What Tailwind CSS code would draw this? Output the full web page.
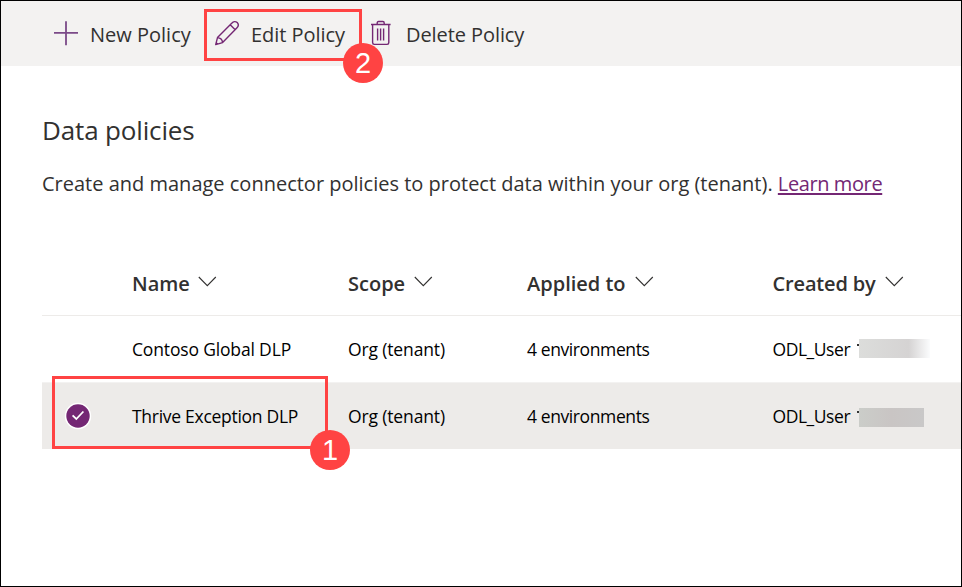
<!DOCTYPE html>
<html lang="en">
<head>
<meta charset="utf-8">
<title>Data policies</title>
<script src="https://cdn.jsdelivr.net/npm/@tailwindcss/browser@4"></script>
</head>
<body class="bg-white">
<div class="relative flex h-[587px] w-[962px] flex-col overflow-hidden border border-black bg-white font-['Open_Sans','Noto_Sans',sans-serif] text-[20px] text-[#323130]">
  <!-- Command bar -->
  <header class="flex h-[65px] shrink-0 items-center bg-[#f3f2f1] pl-[52px]">
    <button class="flex w-[161px] items-center gap-[12px] whitespace-nowrap">
      <svg class="size-[25px] shrink-0" viewBox="0 0 25 25" fill="none" stroke="#7b4a88" stroke-width="1.8"><path d="M13 .3V24.3M1 11.8H25"/></svg>
      <span class="pt-[2px]">New Policy</span>
    </button>
    <button class="flex w-[155px] items-center gap-[11px] whitespace-nowrap">
      <svg class="mb-[2px] size-[26px] shrink-0" viewBox="0 0 26 26" fill="none" stroke="#742774" stroke-width="1.4" stroke-linejoin="round"><path d="M1.7 24.6L3.5 17.6L17.7 3.2C19.4 1.3 21.6 1.1 23.2 2.6C24.7 4.2 24.5 6.4 22.8 8.1L8.6 22.6L1.7 24.6ZM16.2 4.8L21.2 9.8M3.5 17.6C6.2 17.8 8.3 19.8 8.6 22.6M2.2 22.7L3.6 24"/></svg>
      <span class="pt-[2px] tracking-[-0.04px]">Edit Policy</span>
    </button>
    <button class="flex items-center gap-[14px] whitespace-nowrap pl-[1px]">
      <svg class="mb-[1px] h-[26px] w-[22px] shrink-0" viewBox="0 0 22 26" fill="none" stroke="#742774" stroke-width="1.4"><path d="M1 4.5H20.6M7.2 4.5V3C7.2 2.2 7.7 1.5 8.5 1.5H12.9C13.7 1.5 14.2 2.2 14.2 3V4.5M2.6 4.8V22.6C2.6 23.8 3.2 24.4 4.3 24.4H17.1C18.2 24.4 18.8 23.8 18.8 22.6V4.8M7.6 8.4V20.6M10.6 8.4V20.6M13.6 8.4V20.6"/></svg>
      <span class="pt-[2px] tracking-[-0.08px]">Delete Policy</span>
    </button>
  </header>

  <main class="flex flex-col pl-[41px]">
    <h1 class="mt-[46px] text-[26px] leading-[36px] tracking-[-0.15px]">Data policies</h1>
    <p class="mt-[22px] whitespace-nowrap leading-[28px]">Create and manage connector policies to protect data within your org (tenant). <a class="tracking-[-0.4px] text-[#742774] underline decoration-2 underline-offset-[2px]">Learn more</a></p>

    <div class="mt-[52px]">
      <div class="grid h-[66px] grid-cols-[90px_216px_179px_245.5px_1fr] items-center border-b border-[#edebe9] pt-[2px] font-semibold">
        <span></span>
        <span class="flex items-center gap-[8px]">Name<svg class="mb-[4px] h-[11px] w-[19px]" viewBox="0 0 19 11" fill="none" stroke="#323130" stroke-width="1.1"><path d="M.8 1L9.3 9.6L17.8 1"/></svg></span>
        <span class="flex items-center gap-[9px]">Scope<svg class="mb-[4px] h-[11px] w-[19px]" viewBox="0 0 19 11" fill="none" stroke="#323130" stroke-width="1.1"><path d="M.8 1L9.3 9.6L17.8 1"/></svg></span>
        <span class="flex items-center gap-[9px]">Applied to<svg class="mb-[4px] h-[11px] w-[19px]" viewBox="0 0 19 11" fill="none" stroke="#323130" stroke-width="1.1"><path d="M.8 1L9.3 9.6L17.8 1"/></svg></span>
        <span class="flex items-center gap-[9px] whitespace-nowrap"><span class="tracking-[-0.15px]">Created by</span><svg class="mb-[4px] h-[11px] w-[19px]" viewBox="0 0 19 11" fill="none" stroke="#323130" stroke-width="1.1"><path d="M.8 1L9.3 9.6L17.8 1"/></svg></span>
      </div>
      <div class="grid h-[66px] grid-cols-[90px_216px_179px_245.5px_1fr] items-center whitespace-nowrap text-[17.5px] text-black">
        <span></span>
        <span class="tracking-[-0.16px]">Contoso Global DLP</span>
        <span class="tracking-[-0.14px]">Org (tenant)</span>
        <span class="tracking-[-0.4px]">4 environments</span>
        <span class="flex items-center"><span class="w-[84.5px] tracking-[-0.45px]">ODL_User</span><span class="mb-[9px] size-[2px] bg-[#333]"></span><span class="mb-[1px] h-[19px] w-[71px] bg-linear-to-r from-[#dcdddb] via-[#d5d3d3] via-70% to-[#fbfcfd]"></span></span>
      </div>
      <div class="grid h-[67px] grid-cols-[90px_216px_179px_245.5px_1fr] items-center whitespace-nowrap border-t border-[#f3f2f1] bg-[#edebe9] text-[17.5px] text-black">
        <svg class="ml-[22px] size-[28px]" viewBox="0 0 28 28" fill="none"><circle cx="14" cy="14" r="13.2" fill="#fff"/><circle cx="14" cy="14" r="11.7" fill="#742774"/><path d="M8.6 13.4L12.3 17L19.4 9.5" stroke="#fff" stroke-width="1.8"/></svg>
        <span class="tracking-[-0.28px]">Thrive Exception DLP</span>
        <span class="tracking-[-0.14px]">Org (tenant)</span>
        <span class="tracking-[-0.4px]">4 environments</span>
        <span class="flex items-center"><span class="w-[84.5px] tracking-[-0.45px]">ODL_User</span><span class="mb-[9px] size-[2px] bg-[#333]"></span><span class="mt-[2px] h-[19px] w-[65px] bg-linear-to-r from-[#cbcdc9] via-[#c9c5c4] to-[#c9c8c8]"></span></span>
      </div>
    </div>
  </main>

  <!-- Numbered callouts -->
  <div class="absolute left-[203px] top-[8px] h-[52px] w-[158px] border-3 border-[#ff4343]"></div>
  <div class="absolute left-[342px] top-[42px] flex size-[40px] items-center justify-center rounded-full bg-[#ff4343] font-['Liberation_Sans',Arial,sans-serif] text-[29px] leading-none text-white">2</div>
  <div class="absolute left-[51px] top-[375px] h-[73px] w-[276px] border-3 border-[#ff4343]"></div>
  <div class="absolute left-[309px] top-[429px] flex size-[40px] items-center justify-center rounded-full bg-[#ff4343] font-['Liberation_Sans',Arial,sans-serif] text-[29px] leading-none text-white">1</div>
</div>
</body>
</html>
